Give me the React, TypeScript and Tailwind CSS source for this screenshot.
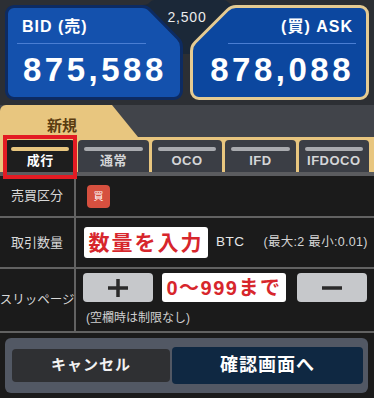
export default function App() {
  const tabs = ["成行", "通常", "OCO", "IFD", "IFDOCO"];
  return (
    <div className="w-[374px] h-[398px] overflow-hidden bg-[#1b1b1b] font-['Liberation_Sans','Noto_Sans_CJK_JP',sans-serif] text-white">
      {/* price area */}
      <div className="relative flex h-[105px] gap-[7px] bg-[#2c2f34] px-[5px] pt-[5px]">
        <div className="flex h-[95px] w-[178px] flex-col rounded-[9px] border-[3px] border-[#0d2b62] bg-[#1451ad]">
          <div className="pl-[14px] pt-[10px] text-[16px] font-bold leading-[18px] tracking-[1px]">BID (売)</div>
          <div className="ml-[9px] mr-[34px] mt-[7px] h-px bg-[#4a7ed3]" />
          <div className="mt-[9px] pl-[15px] text-[33px] font-bold leading-[33px] tracking-[3.5px]">875,588</div>
        </div>
        <div className="flex h-[95px] w-[179px] flex-col items-end rounded-[9px] border-[3px] border-[#e5cb92] bg-[#0c479f]">
          <div className="pr-[13px] pt-[10px] text-[16px] font-bold leading-[18px] tracking-[1px]">(買) ASK</div>
          <div className="ml-[35px] mr-[10px] mt-[7px] h-px w-[128px] bg-[#4a7ed3]" />
          <div className="mt-[9px] pr-[12px] text-[33px] font-bold leading-[33px] tracking-[3.5px]">878,088</div>
        </div>
        <svg className="absolute left-[140px] top-0" width="105" height="60" viewBox="140 0 105 60">
          <path
            d="M140 5 H143 Q148 5 150 2 Q151.5 0 155 0 H223 Q226.5 0 228 2 Q230 5 235 5 H240 V6.5 H236 Q231 6.5 227.5 10 L195 42.5 Q191.5 46 191.5 51 V54 H181.5 V47 Q181.5 42 178 38.5 L150 10 Q147 6.5 142 6.5 H140 Z"
            fill="#1b2838"
          />
          <path d="M140 6.5 H142 Q147 6.5 150 10 L178 38.5 Q181.5 42 181.5 47 V60" fill="none" stroke="#0d2b62" strokeWidth="3" />
          <path d="M245 6.5 H236 Q231 6.5 227.5 10 L195 42.5 Q191.5 46 191.5 51 V60" fill="none" stroke="#e5cb92" strokeWidth="3" />
        </svg>
        <div className="absolute left-[148px] top-[9px] w-[78px] text-center text-[14px] leading-[16px] tracking-[0.8px] text-[#ececec]">2,500</div>
      </div>

      {/* 新規 header */}
      <div className="flex h-[32px] bg-[#41444a]">
        <div className="h-full w-[138px] rounded-tl-[6px] bg-[#e8c67f] [clip-path:polygon(0_0,112px_0,138px_100%,0_100%)]">
          <div className="w-[124px] pt-[12px] text-center text-[15px] font-bold leading-[18px] text-[#5a3c10]">新規</div>
        </div>
      </div>

      {/* tabs */}
      <div className="relative bg-[#e8c67f]">
        <div className="flex gap-[3px] px-[5px] pt-[3px]">
          {tabs.map((t, i) => (
            <div
              key={t}
              className={
                i === 0
                  ? "flex h-[32px] flex-1 flex-col items-stretch rounded-t-[4px] bg-[#1e1e1e] px-[6px] pt-[7px]"
                  : "flex h-[32px] flex-1 flex-col items-stretch rounded-t-[4px] bg-[#3b3e45] px-[6px] pt-[7px]"
              }
            >
              <div className={i === 0 ? "h-[4px] rounded-full bg-[#e8c67f]" : "h-[4px] rounded-full bg-[#a9abaf]"} />
              <div
                className={
                  i === 0
                    ? "mt-[1px] text-center text-[13px] font-bold leading-[18px] tracking-[0.5px] text-white"
                    : "mt-[1px] text-center text-[13px] font-bold leading-[18px] tracking-[0.5px] text-[#d4d5d7]"
                }
              >
                {t}
              </div>
            </div>
          ))}
        </div>
        <div className="h-[4px] bg-[#5b5c5f]" />
        <div className="absolute left-[3px] top-[-2px] h-[44px] w-[74px] border-[4px] border-[#e31b23]" />
      </div>

      {/* rows */}
      <div className="flex h-[42px] border-b-2 border-[#626262]">
        <div className="flex w-[76px] items-center justify-center border-r-2 border-[#626262] text-[13px] text-[#d8d8d8]">売買区分</div>
        <div className="flex items-center pl-[11px]">
          <div className="flex h-[23px] w-[23px] items-center justify-center rounded-[4px] bg-[#d6503f] text-[10px] text-white">買</div>
        </div>
      </div>
      <div className="flex h-[51px] border-b-2 border-[#626262]">
        <div className="flex w-[76px] items-center justify-center border-r-2 border-[#626262] text-[13px] text-[#d8d8d8]">取引数量</div>
        <div className="flex items-center pl-[8px]">
          <div className="flex h-[31px] w-[124px] items-center justify-center rounded-[3px] bg-white text-[21px] font-bold tracking-[2px] text-[#d7262c]">数量を入力</div>
          <div className="ml-[8px] text-[13.5px] tracking-[0.5px] text-[#e6e6e6]">BTC</div>
          <div className="ml-[19px] whitespace-nowrap text-[12.5px] tracking-[0.3px] text-[#d4d4d4]">(最大:2 最小:0.01)</div>
        </div>
      </div>
      <div className="flex h-[64px] border-b-2 border-[#626262]">
        <div className="flex w-[76px] items-center justify-center whitespace-nowrap border-r-2 border-[#626262] text-[12.5px] text-[#d8d8d8]">スリッページ</div>
        <div className="flex flex-col pl-[7px] pt-[4px]">
          <div className="flex items-center">
            <div className="flex h-[29px] w-[70px] items-center justify-center rounded-[4px] bg-[#c6c8cb]">
              <svg width="20" height="18" viewBox="0 0 20 18">
                <path d="M0 9 H20 M10 0 V18" stroke="#2a2a2a" strokeWidth="3.5" />
              </svg>
            </div>
            <div className="ml-[9px] flex h-[29px] w-[124px] items-center justify-center rounded-[3px] bg-white text-[20px] font-bold tracking-[1.5px] text-[#d7262c]">0〜999まで</div>
            <div className="ml-[11px] flex h-[29px] w-[70px] items-center justify-center rounded-[4px] bg-[#c6c8cb]">
              <svg width="20" height="4" viewBox="0 0 20 4">
                <path d="M0 2 H20" stroke="#2a2a2a" strokeWidth="3.5" />
              </svg>
            </div>
          </div>
          <div className="ml-[3px] mt-[8px] text-[12px] leading-[16px] text-[#cfcfcf]">(空欄時は制限なし)</div>
        </div>
      </div>

      {/* bottom buttons */}
      <div className="ml-[5px] mt-[5px] flex h-[55px] w-[363px] items-center gap-[2px] rounded-[6px] bg-[#525864] pl-[7px] pr-[5px]">
        <div className="flex h-[33px] w-[158px] items-center justify-center rounded-[4px] bg-[#2f3033] text-[15px] font-bold tracking-[1px] text-[#f2f2f2]">キャンセル</div>
        <div className="flex h-[37px] flex-1 items-center justify-center rounded-[4px] bg-[#0f2842] text-[18px] font-bold tracking-[1px] text-white">確認画面へ</div>
      </div>
    </div>
  );
}
